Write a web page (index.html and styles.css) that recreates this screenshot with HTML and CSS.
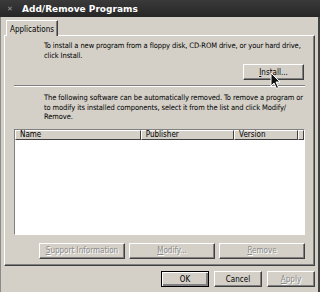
FILE: index.html
```html
<!DOCTYPE html>
<html lang="en">
<head>
  <meta charset="UTF-8" />
  <title>Add/Remove Programs</title>
  <link rel="stylesheet" href="styles.css">
</head>
<body>
  <div class="titlebar">
    <span class="close">✕</span>
    <span class="title">Add/Remove Programs</span>
  </div>

  <div class="dialog">
    <div class="tabs">
      <div class="tab">Applications</div>
    </div>

    <div class="panel">
      <p class="info">To install a new program from a floppy disk, CD-ROM drive, or your hard drive,<br>click Install.</p>
      <div class="install-row">
        <button class="btn install"><u>I</u>nstall...</button>
        <svg class="cursor" width="12" height="18" viewBox="0 0 12 18">
          <path d="M1 1 L1 14 L4 11 L6.5 16.5 L8.5 15.5 L6 10 L10 10 Z" fill="#111" stroke="#fff" stroke-width="1"/>
        </svg>
      </div>
      <div class="separator"></div>
      <p class="info">The following software can be automatically removed. To remove a program or<br>to modify its installed components, select it from the list and click Modify/<br>Remove.</p>

      <div class="list">
        <div class="list-head">
          <div class="col name">Name</div>
          <div class="col publisher">Publisher</div>
          <div class="col version">Version</div>
          <div class="col rest"></div>
        </div>
        <div class="list-body"></div>
      </div>

      <div class="list-buttons">
        <button class="btn wide" disabled><u>S</u>upport Information</button>
        <button class="btn wide" disabled><u>M</u>odify...</button>
        <button class="btn wide" disabled><u>R</u>emove</button>
      </div>
    </div>

    <div class="footer">
      <button class="btn small default">OK</button>
      <button class="btn small">Cancel</button>
      <button class="btn small" disabled><u>A</u>pply</button>
    </div>
  </div>
</body>
</html>
```

FILE: styles.css
```css
body {
  margin: 0;
  width: 320px;
  height: 292px;
  overflow: hidden;
  background: #d4d0c8;
  font-family: "DejaVu Sans Condensed", "DejaVu Sans", Verdana, sans-serif;
  font-stretch: condensed;
  font-size: 8px;
  color: #000;
}

.titlebar {
  height: 17px;
  background: linear-gradient(#3a3a3a, #262626);
  color: #fff;
  display: flex;
  align-items: center;
  font-family: "DejaVu Sans", Verdana, sans-serif;
  font-stretch: normal;
  font-weight: bold;
  font-size: 9px;
}
.titlebar .close {
  width: 20px;
  text-align: center;
  color: #9a9a9a;
  font-size: 7px;
  font-weight: normal;
}
.titlebar .title {
  margin-left: 2px;
}

.dialog {
  border-left: 1px solid #8a8a8a;
  border-right: 2px solid #404040;
  height: 275px;
  box-sizing: border-box;
  padding: 2px 3px 0 3px;
  display: flex;
  flex-direction: column;
}

.tabs {
  display: flex;
  padding-left: 2px;
  height: 16px;
}
.tab {
  padding: 4px 3px 0 3px;
  border-top: 1px solid #fff;
  border-left: 1px solid #fff;
  border-right: 1px solid #404040;
  box-shadow: inset -1px 0 0 #808080;
  margin-top: 1px;
  position: relative;
  z-index: 1;
  background: #d4d0c8;
  margin-bottom: -1px;
}

.panel {
  border-top: 1px solid #fff;
  border-left: 1px solid #fff;
  border-right: 1px solid #404040;
  border-bottom: 1px solid #404040;
  box-shadow: inset -1px -1px 0 #808080;
  height: 231px;
  box-sizing: border-box;
  padding: 5px 9px 0 9px;
}

.info {
  margin: 0 -4px 0 30px;
  font-size: 7.5px;
  line-height: 9.5px;
  letter-spacing: -0.1px;
  white-space: nowrap;
}

.install-row {
  display: flex;
  justify-content: flex-end;
  position: relative;
  margin-top: 4px;
  padding-right: 1px;
}
.btn {
  font-family: "DejaVu Sans Condensed", "DejaVu Sans", Verdana, sans-serif;
  font-stretch: condensed;
  font-size: 8px;
  background: #d4d0c8;
  color: #000;
  border: 1px solid;
  border-color: #fff #404040 #404040 #fff;
  box-shadow: inset -1px -1px 0 #808080;
  height: 16px;
  padding: 0;
}
.btn:disabled {
  color: #8a8a8a;
  text-shadow: 1px 1px 0 #fff;
}
.btn.install {
  width: 61px;
}
.cursor {
  position: absolute;
  left: 256px;
  top: 8px;
}

.separator {
  margin: 5px 0 6px 0;
  border-top: 1px solid #808080;
  border-bottom: 1px solid #fff;
}

.list {
  margin-top: 7px;
  border-top: 1px solid #808080;
  border-left: 1px solid #808080;
  border-right: 1px solid #fff;
  border-bottom: 1px solid #fff;
}
.list-head {
  display: flex;
  height: 10px;
}
.col {
  box-sizing: border-box;
  border-top: 1px solid #fff;
  border-left: 1px solid #fff;
  border-right: 1px solid #404040;
  border-bottom: 1px solid #404040;
  padding-left: 4px;
  line-height: 8px;
}
.col.name { width: 128px; }
.col.publisher { width: 95px; }
.col.version { width: 65px; }
.col.rest { flex: 1; }
.list-body {
  height: 94px;
  background: #fff;
}

.list-buttons {
  display: flex;
  justify-content: flex-end;
  gap: 4px;
  margin-top: 8px;
}
.btn.wide {
  width: 86px;
}

.footer {
  display: flex;
  justify-content: flex-end;
  gap: 5px;
  margin-top: 5px;
}
.btn.small {
  width: 48px;
}
.btn.default {
  border-color: #000;
  box-shadow: inset 1px 1px 0 #fff, inset -2px -2px 0 #808080;
}
```
